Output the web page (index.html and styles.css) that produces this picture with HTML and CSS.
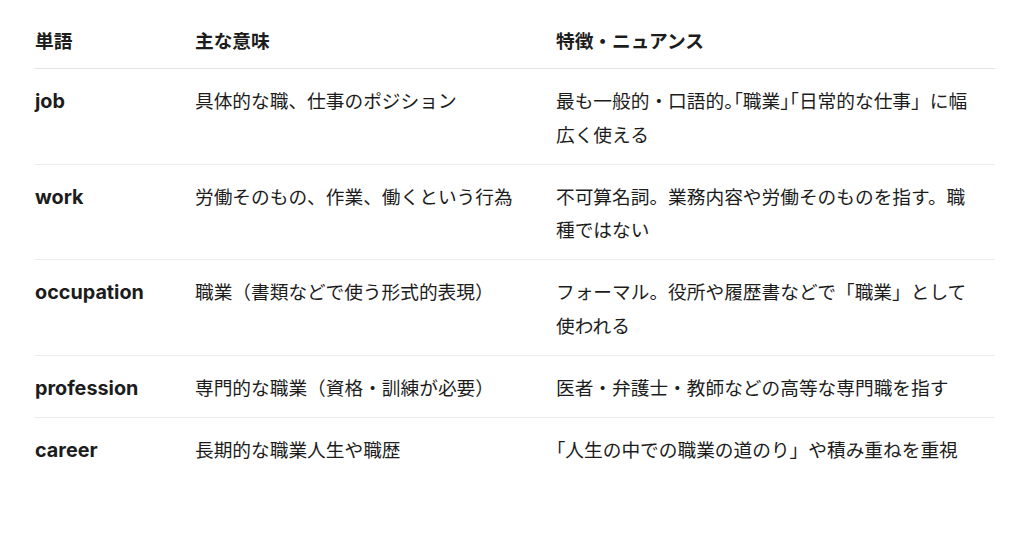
FILE: index.html
```html
<!DOCTYPE html>
<html lang="ja">
<head>
<meta charset="utf-8">
<link rel="stylesheet" href="styles.css">
</head>
<body>
<table class="words">
  <colgroup>
    <col class="c1"><col class="c2"><col class="c3">
  </colgroup>
  <thead>
    <tr><th>単語</th><th>主な意味</th><th>特徴・ニュアンス</th></tr>
  </thead>
  <tbody>
    <tr><td class="w">job</td><td>具体的な職、仕事のポジション</td><td>最も一般的・口語的<span class="trim">。</span>「職業<span class="trim">」</span>「日常的な仕事」に幅広く使える</td></tr>
    <tr><td class="w">work</td><td>労働そのもの、作業、働くという行為</td><td>不可算名詞。業務内容や労働そのものを指す。職種ではない</td></tr>
    <tr><td class="w">occupation</td><td>職業（書類などで使う形式的表現）</td><td>フォーマル。役所や履歴書などで「職業」として使われる</td></tr>
    <tr><td class="w">profession</td><td>専門的な職業（資格・訓練が必要）</td><td>医者・弁護士・教師などの高等な専門職を指す</td></tr>
    <tr><td class="w">career</td><td>長期的な職業人生や職歴</td><td>「人生の中での職業の道のり」や積み重ねを重視</td></tr>
  </tbody>
</table>
</body>
</html>
```

FILE: styles.css
```css
html, body {
  margin: 0;
  padding: 0;
  background: #ffffff;
}
body {
  font-family: "Inter", "Noto Sans CJK JP", sans-serif;
  font-size: 18.7px;
  color: #1c1c1c;
  padding: 10px 29px 0 35px;
}
.words {
  width: 960px;
  border-collapse: collapse;
  table-layout: fixed;
  text-spacing-trim: trim-start;
}
.c1 { width: 160px; }
.c2 { width: 361px; }
.c3 { width: 439px; }
.words th,
.words td {
  text-align: left;
  vertical-align: top;
  padding: 16px 16px 12px 0;
  line-height: 33.3px;
}
.words th {
  font-weight: 700;
  padding-top: 15px;
  padding-bottom: 10px;
  border-bottom: 1px solid #e3e3e3;
}
.words td {
  font-weight: 400;
}
.words tbody tr {
  border-bottom: 1px solid #ececec;
}
.words tbody tr:last-child {
  border-bottom: none;
}
.words td.w {
  font-weight: 700;
  font-size: 19.8px;
}
.trim {
  letter-spacing: -0.5em;
}
```
